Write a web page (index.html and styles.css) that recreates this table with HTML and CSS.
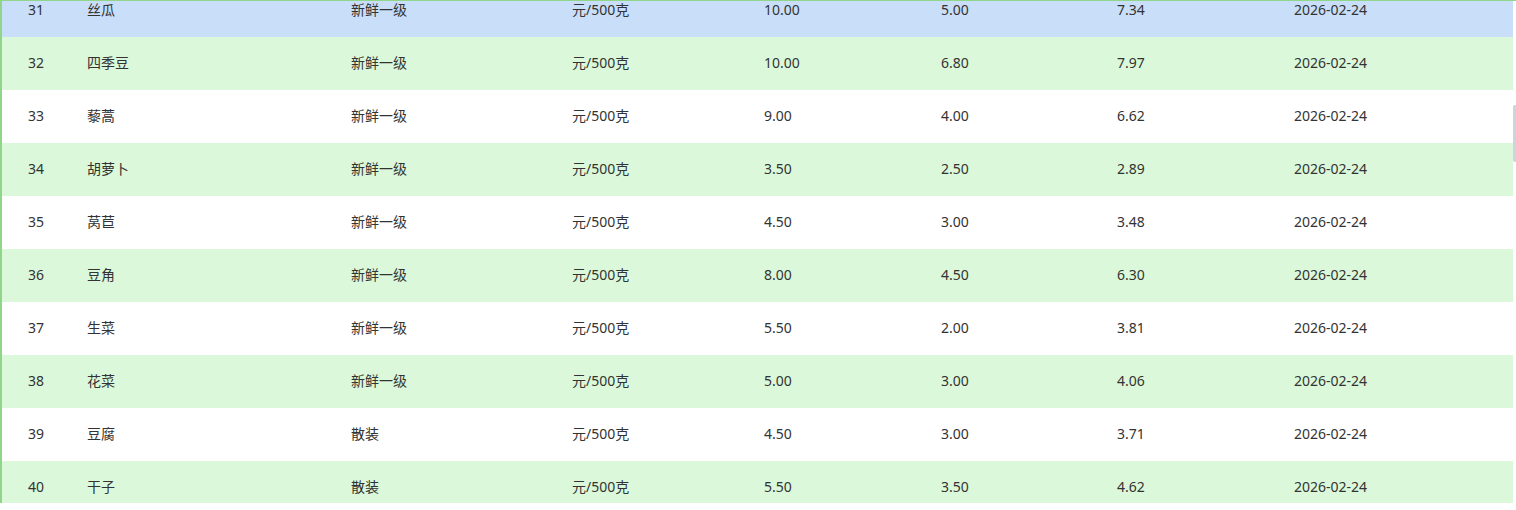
FILE: index.html
```html
<!DOCTYPE html>
<html lang="zh">
<head>
<meta charset="utf-8">
<title>价格表</title>
<link rel="stylesheet" href="styles.css">
</head>
<body>
<div class="frame">
  <div class="viewport">
    <div class="table">
      <div class="row blue"><span class="c num">31</span><span class="c">丝瓜</span><span class="c">新鲜一级</span><span class="c">元/500克</span><span class="c">10.00</span><span class="c">5.00</span><span class="c">7.34</span><span class="c">2026-02-24</span></div>
      <div class="row green"><span class="c num">32</span><span class="c">四季豆</span><span class="c">新鲜一级</span><span class="c">元/500克</span><span class="c">10.00</span><span class="c">6.80</span><span class="c">7.97</span><span class="c">2026-02-24</span></div>
      <div class="row"><span class="c num">33</span><span class="c">藜蒿</span><span class="c">新鲜一级</span><span class="c">元/500克</span><span class="c">9.00</span><span class="c">4.00</span><span class="c">6.62</span><span class="c">2026-02-24</span></div>
      <div class="row green"><span class="c num">34</span><span class="c">胡萝卜</span><span class="c">新鲜一级</span><span class="c">元/500克</span><span class="c">3.50</span><span class="c">2.50</span><span class="c">2.89</span><span class="c">2026-02-24</span></div>
      <div class="row"><span class="c num">35</span><span class="c">莴苣</span><span class="c">新鲜一级</span><span class="c">元/500克</span><span class="c">4.50</span><span class="c">3.00</span><span class="c">3.48</span><span class="c">2026-02-24</span></div>
      <div class="row green"><span class="c num">36</span><span class="c">豆角</span><span class="c">新鲜一级</span><span class="c">元/500克</span><span class="c">8.00</span><span class="c">4.50</span><span class="c">6.30</span><span class="c">2026-02-24</span></div>
      <div class="row"><span class="c num">37</span><span class="c">生菜</span><span class="c">新鲜一级</span><span class="c">元/500克</span><span class="c">5.50</span><span class="c">2.00</span><span class="c">3.81</span><span class="c">2026-02-24</span></div>
      <div class="row green"><span class="c num">38</span><span class="c">花菜</span><span class="c">新鲜一级</span><span class="c">元/500克</span><span class="c">5.00</span><span class="c">3.00</span><span class="c">4.06</span><span class="c">2026-02-24</span></div>
      <div class="row"><span class="c num">39</span><span class="c">豆腐</span><span class="c">散装</span><span class="c">元/500克</span><span class="c">4.50</span><span class="c">3.00</span><span class="c">3.71</span><span class="c">2026-02-24</span></div>
      <div class="row green"><span class="c num">40</span><span class="c">干子</span><span class="c">散装</span><span class="c">元/500克</span><span class="c">5.50</span><span class="c">3.50</span><span class="c">4.62</span><span class="c">2026-02-24</span></div>
    </div>
  </div>
  <div class="track"><div class="thumb"></div></div>
</div>
</body>
</html>
```

FILE: styles.css
```css
html, body {
  margin: 0;
  padding: 0;
  background: #ffffff;
  overflow: hidden;
}
body {
  width: 1516px;
  height: 510px;
  font-family: "Noto Sans", "Noto Sans CJK SC", "Liberation Sans", sans-serif;
  font-size: 14px;
  color: #333333;
}
.frame {
  display: flex;
  height: 502px;
  border-top: 1px solid #8fd68a;
  border-left: 2px solid #8fd68a;
}
.viewport {
  width: 1511px;
  height: 502px;
  overflow: hidden;
}
.table {
  margin-top: -17px;
}
.row {
  display: grid;
  grid-template-columns: 85px 264px 221px 192px 177px 176px 177px 1fr;
  height: 53px;
  box-sizing: border-box;
  padding-bottom: 1px;
  align-items: center;
  background: #ffffff;
}
.row.green {
  background: #dbf9da;
}
.row.blue {
  background: #c9def9;
}
.c {
  white-space: nowrap;
  line-height: 20px;
}
.c.num {
  padding-left: 26px;
}
.track {
  width: 3px;
  height: 502px;
}
.thumb {
  margin-top: 104px;
  width: 3px;
  height: 57px;
  background: #cfd3da;
  border-radius: 2px 0 0 2px;
}
```
